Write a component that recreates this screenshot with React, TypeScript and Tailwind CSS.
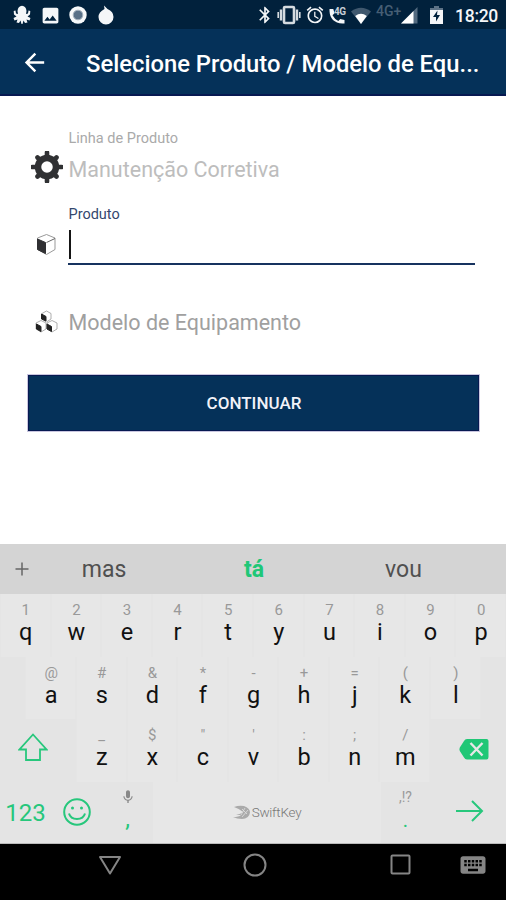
import { MdAlarm, MdArrowBack, MdBluetooth, MdImage, MdKeyboard, MdMic } from "react-icons/md";

const topRow = [
  ["q", "1"],
  ["w", "2"],
  ["e", "3"],
  ["r", "4"],
  ["t", "5"],
  ["y", "6"],
  ["u", "7"],
  ["i", "8"],
  ["o", "9"],
  ["p", "0"],
];

const middleRow = [
  ["a", "@"],
  ["s", "#"],
  ["d", "&"],
  ["f", "*"],
  ["g", "-"],
  ["h", "+"],
  ["j", "="],
  ["k", "("],
  ["l", ")"],
];

const bottomRow = [
  ["z", "_"],
  ["x", "$"],
  ["c", "\""],
  ["v", "'"],
  ["b", ":"],
  ["n", ";"],
  ["m", "/"],
];

const Key = ({ letter, hint }: { letter: string; hint: string }) => (
  <div className="w-[50.6px] h-[62.5px] pl-[1px] pt-[7px] flex flex-col items-center bg-[#e7e7e7] border-x border-[#e5e5e5]">
    <span className="text-[15px] leading-[18px] text-[#999]">{hint}</span>
    <span className="mt-[-1px] text-[23.5px] leading-[28px] text-[#111]">{letter}</span>
  </div>
);

const StatusBar = () => (
  <div className="flex items-center justify-between h-[29px] pl-[12px] pr-[8px] bg-[#01213c] text-[#f4f6f8]">
    <div className="flex items-center gap-[9px] pt-[1px]">
      <svg width="20" height="20" viewBox="0 0 20 20" fill="currentColor">
        <path d="M10 .8Q14 1 14.500 6L14 9 16 8.500 16.500 5.500 18.300 6 18 9.500 15.500 11.500 18.500 13 17.500 15.500 14.500 14.500 15.500 17.500 13 18 11.500 15.500 10.500 19H9.500L8.500 15.500 7 18 4.500 17.500 5.500 14.500 2.500 15.500 1.500 13 4.500 11.500 2 9.500 1.700 6 3.500 5.500 4 8.500 6 9 5.500 6Q6 1 10 .8Z" />
      </svg>
      <MdImage className="size-[21px] -mx-[1px]" />
      <svg width="18" height="18" viewBox="0 0 18 18">
        <circle cx="9" cy="9" r="8.7" fill="#f7f9fa" />
        <circle cx="9" cy="9" r="4.8" fill="#587087" stroke="#a2b0bc" />
      </svg>
      <svg width="18" height="20" viewBox="0 0 18 20" className="ml-[1px]" fill="currentColor">
        <path d="M7 .5 10.5 4Q16.500 6.500 16.500 12A7.500 7.500 0 0 1 1.500 12Q1.500 7 7.500 4Z" />
      </svg>
    </div>
    <div className="flex items-center">
      <MdBluetooth className="size-[20px] stroke-current" />
      <svg width="24" height="20" viewBox="0 0 24 20" className="ml-[2px] mr-[1px]" stroke="#d5dbe0" fill="none">
        <path d="M1.200 7V13M22.800 7V13" strokeWidth="1.600" />
        <path d="M4 4.500V15.500M20 4.500V15.500" strokeWidth="2.400" />
        <rect x="7" y="2" width="10" height="16" rx="1" strokeWidth="2.600" />
      </svg>
      <MdAlarm className="size-[20px] ml-[3px] stroke-current" />
      <div className="relative w-[20px] h-[20px] ml-[3px]">
        <svg width="20" height="20" viewBox="0 0 20 20" fill="currentColor">
          <path d="M1.500 4h3.800l1.200 4.200-2 2q2 3.800 5.800 5.700l2-2 4.200 1.200v3.500h-2Q2 17.500 1.500 6Z" />
        </svg>
        <span className="absolute left-[6px] top-[2px] text-[10px] leading-[10px] font-bold tracking-[-0.5px] text-[#c5ced6]">4G</span>
      </div>
      <svg width="22" height="18" viewBox="0 0 22 18" className="ml-[2px] mt-[2px]">
        <path d="M1 4.500Q11-3 21 4.500L11 17Z" fill="#40586e" />
        <path d="M5.200 9Q11 4.500 16.800 9L11 17Z" fill="#fff" />
      </svg>
      <span className="w-[27px] ml-[4px] pb-[8px] text-[14px] leading-[14px] text-[#465e74] font-medium">4G+</span>
      <svg width="17" height="17" viewBox="0 0 17 17" className="-ml-[2px] mt-[2px]">
        <path d="M16.500 0V16.500H0Z" fill="#536a7f" />
        <path d="M12.500 4V16.500H0Z" fill="#fff" />
      </svg>
      <svg width="13" height="18" viewBox="0 0 13 18" className="ml-[12px] mt-[1px]">
        <path d="M4 0H9V2H13V6H0V2H4Z" fill="#5d7286" />
        <path d="M0 4H13V18H0Z" fill="#f5f6f8" />
        <path d="M7.500 4.500 3 11h3v4.500L10 9H7Z" fill="#01213c" />
      </svg>
      <span className="ml-[12px] pt-[3px] text-[17.5px] leading-[20px] font-medium tracking-[-0.3px]">18:20</span>
    </div>
  </div>
);

const App = () => {
  return (
    <div className="w-[506px] h-[900px] flex flex-col overflow-hidden bg-white font-[Roboto,sans-serif]">
      <StatusBar />
      <div className="h-[67px] shrink-0 flex items-center bg-[#053159] border-b-2 border-[#071951] text-white">
        <MdArrowBack className="size-[29px] ml-[20px] mt-[1px]" />
        <h1 className="ml-[37px] pt-[4px] text-[23.8px] leading-[30px] font-medium whitespace-nowrap">
          Selecione Produto / Modelo de Equ...
        </h1>
      </div>

      <div className="h-[448px] shrink-0 pt-[33px] px-[27px]">
        <div className="flex h-[76px]">
          <div className="w-[41px] pt-[22px] pl-[4px]">
            <svg width="32" height="32" viewBox="0 0 32 32">
              <circle cx="16" cy="16" r="9" fill="none" stroke="#303133" strokeWidth="6.5" />
              <path
                d="M16 1.500V5M16 27V30.500M1.500 16H5M27 16H30.500M6.500 6.500 8 8M24 24 25.500 25.500M25.500 6.500 24 8M8 24 6.500 25.500"
                stroke="#303133"
                strokeWidth="4.6"
                strokeLinecap="round"
              />
            </svg>
          </div>
          <div className="flex flex-col">
            <span className="pt-[1px] pl-[0.5px] text-[14.5px] leading-[18px] text-[#aaa]">Linha de Produto</span>
            <span className="mt-[8px] pl-[0.5px] text-[21.5px] leading-[28px] text-[#bdbdbd]">Manutenção Corretiva</span>
          </div>
        </div>
        <div className="flex h-[92px]">
          <div className="w-[41px] pt-[28px] pl-[9px]">
            <svg width="21" height="23" viewBox="0 0 21 23" strokeLinejoin="round">
              <path d="M10.500 1.500 19 5V16.500L10.500 21.500 1.500 16.500V5Z" fill="#fff" stroke="#999" />
              <path d="M1.500 6 9.500 9.500V20.500L1.500 16.500Z" fill="#303033" stroke="#303033" />
              <path d="M10.500 9.500 19 5.500" stroke="#666" />
            </svg>
          </div>
          <div className="flex-1 mr-[4px]">
            <p className="pt-[1px] pl-[0.5px] text-[14.5px] leading-[18px] text-[#34476d]">Produto</p>
            <div className="h-[41px] pt-[6px] pl-[1px] border-b-2 border-[#17335f]">
              <div className="w-[2px] h-[29px] bg-[#151515]" />
            </div>
          </div>
        </div>
        <div className="flex h-[77px]">
          <div className="w-[41px] pt-[13px] pl-[8px]">
            <svg width="23" height="23" viewBox="0 0 23 23" strokeLinejoin="round">
              <g fill="#fff" stroke="#999" strokeWidth=".8">
                <path d="M11.500 1 16 3.500V9L11.500 12 7 9V3.500Z" />
                <path d="M6 10.500 11 13V19L6 22 1 19V13Z" />
                <path d="M17 10.500 22 13V19L17 22 12 19V13Z" />
              </g>
              <g fill="#222" stroke="#222">
                <path d="M6.500 4 11 6.500V11L6.500 9Z" />
                <path d="M1.500 14 6 16.500V21.500L1.500 19Z" />
                <path d="M12 14 16.500 16.500V21.500L12 19Z" />
              </g>
            </svg>
          </div>
          <p className="pt-[12px] pl-[0.5px] text-[21.5px] leading-[28px] text-[#a0a0a0]">Modelo de Equipamento</p>
        </div>
        <button className="w-[453px] h-[58px] pl-[1px] pt-[1px] flex items-center justify-center bg-[#053159] border-2 border-[#071951] outline outline-[#c9c6df] -outline-offset-1 text-[17px] font-medium text-[#f2f2f8]">
          CONTINUAR
        </button>
      </div>

      <div className="h-[50px] shrink-0 flex items-center bg-[#d4d4d4] text-[#505050] text-[23px]">
        <svg width="14" height="14" viewBox="0 0 14 14" className="ml-[15px]" stroke="#666" strokeWidth="1.5">
          <path d="M7 .5V13.500M.5 7H13.500" />
        </svg>
        <span className="w-[150px] pt-[2px] text-center">mas</span>
        <span className="w-[150px] pt-[2px] text-center font-bold text-[#20c777]">tá</span>
        <span className="w-[149px] pt-[2px] text-center">vou</span>
      </div>

      <div className="h-[250px] shrink-0 bg-[#e4e4e4] border-b border-[#bbb]">
        <div className="flex">
          {topRow.map(([letter, hint]) => (
            <Key key={letter} letter={letter} hint={hint} />
          ))}
        </div>
        <div className="flex justify-center">
          {middleRow.map(([letter, hint]) => (
            <Key key={letter} letter={letter} hint={hint} />
          ))}
        </div>
        <div className="flex justify-center">
          <div className="w-[75.9px] flex items-center pl-[18px] pb-[5px]">
            <svg width="30" height="29" viewBox="0 0 30 29" fill="none" stroke="#27c77c" strokeWidth="1.8">
              <path d="M15 1.500 28.500 16.500H22V27H8V16.500H1.500Z" />
            </svg>
          </div>
          {bottomRow.map(([letter, hint]) => (
            <Key key={letter} letter={letter} hint={hint} />
          ))}
          <div className="w-[75.9px] flex items-center pl-[29px] pb-[2px]">
            <svg width="30" height="21" viewBox="0 0 30 21">
              <path d="M8 0H27.500Q29.500 0 29.500 2V18Q29.500 20.500 27.500 20.500H8Q6 20.500 5 18.500L.8 12Q0 10.300.8 8.500L5 2Q6 0 8 0Z" fill="#20c776" />
              <path d="M11.500 4 23.500 16.500M23.500 4 11.500 16.500" stroke="#e7e7e7" strokeWidth="2.4" />
            </svg>
          </div>
        </div>
        <div className="flex h-[61.5px] text-[#27c77c]">
          <span className="w-[51px] pt-[17px] text-center text-[24px] leading-[28px]">123</span>
          <div className="w-[51px] pt-[16px] flex justify-center">
            <svg width="28" height="28" viewBox="0 0 28 28" fill="none" stroke="currentColor" strokeWidth="2">
              <circle cx="14" cy="14" r="12.8" />
              <path d="M6 15.500Q7.500 21 14 21Q20.500 21 22 15.500" />
              <circle cx="9.5" cy="10" r="1.5" fill="currentColor" stroke="none" />
              <circle cx="18.5" cy="10" r="1.5" fill="currentColor" stroke="none" />
            </svg>
          </div>
          <div className="w-[51px] pt-[7px] flex flex-col items-center">
            <MdMic className="size-[16px] text-[#888]" />
            <span className="text-[24px] leading-[28px]">,</span>
          </div>
          <div className="w-[228px] flex items-center justify-center bg-[#e7e7e7] text-[#999]">
            <svg width="18" height="15" viewBox="0 0 18 15">
              <path d="M1 2Q6 0 11 1Q17 3 17 7.500Q16 14 9 14Q4 14 0 12Q6 12 8 10H3Q8 9 10 7Q7 4 1 2Z" fill="#aaa" />
              <path d="M9 4 14 9M12 3 8 10M15 5 9 12" stroke="#e1e1e1" strokeWidth=".8" />
            </svg>
            <span className="ml-[1px] font-light text-[13.5px] tracking-[-0.25px] text-[#777]">SwiftKey</span>
          </div>
          <div className="w-[49px] pt-[7px] flex flex-col items-center">
            <span className="text-[14px] leading-[16px] text-[#999]">,!?</span>
            <span className="mt-[1px] text-[20px] leading-[28px]">.</span>
          </div>
          <div className="flex-1 pt-[18px] pl-[26px]">
            <svg width="28" height="22" viewBox="0 0 28 22" fill="none" stroke="currentColor" strokeWidth="2">
              <path d="M0 11H26M16 1 26 11 16 21" />
            </svg>
          </div>
        </div>
      </div>

      <div className="h-[56px] shrink-0 flex bg-black text-[#858585]">
        <svg width="24" height="21" viewBox="0 0 24 21" className="ml-[98px] mt-[11px]" fill="none" stroke="currentColor" strokeWidth="2">
          <path d="M2 2H22L12 18.500Z" strokeLinejoin="round" />
        </svg>
        <svg width="24" height="24" viewBox="0 0 24 24" className="ml-[121px] mt-[9px]" fill="none" stroke="currentColor" strokeWidth="2">
          <circle cx="12" cy="12" r="10.5" />
        </svg>
        <svg width="21" height="21" viewBox="0 0 21 21" className="ml-[123px] mt-[10px]" fill="none" stroke="currentColor" strokeWidth="2">
          <rect x="1.5" y="1.5" width="18" height="18" rx="1" />
        </svg>
        <MdKeyboard className="size-[30px] ml-[47px] mt-[6px]" />
      </div>
    </div>
  );
};
export default App;
